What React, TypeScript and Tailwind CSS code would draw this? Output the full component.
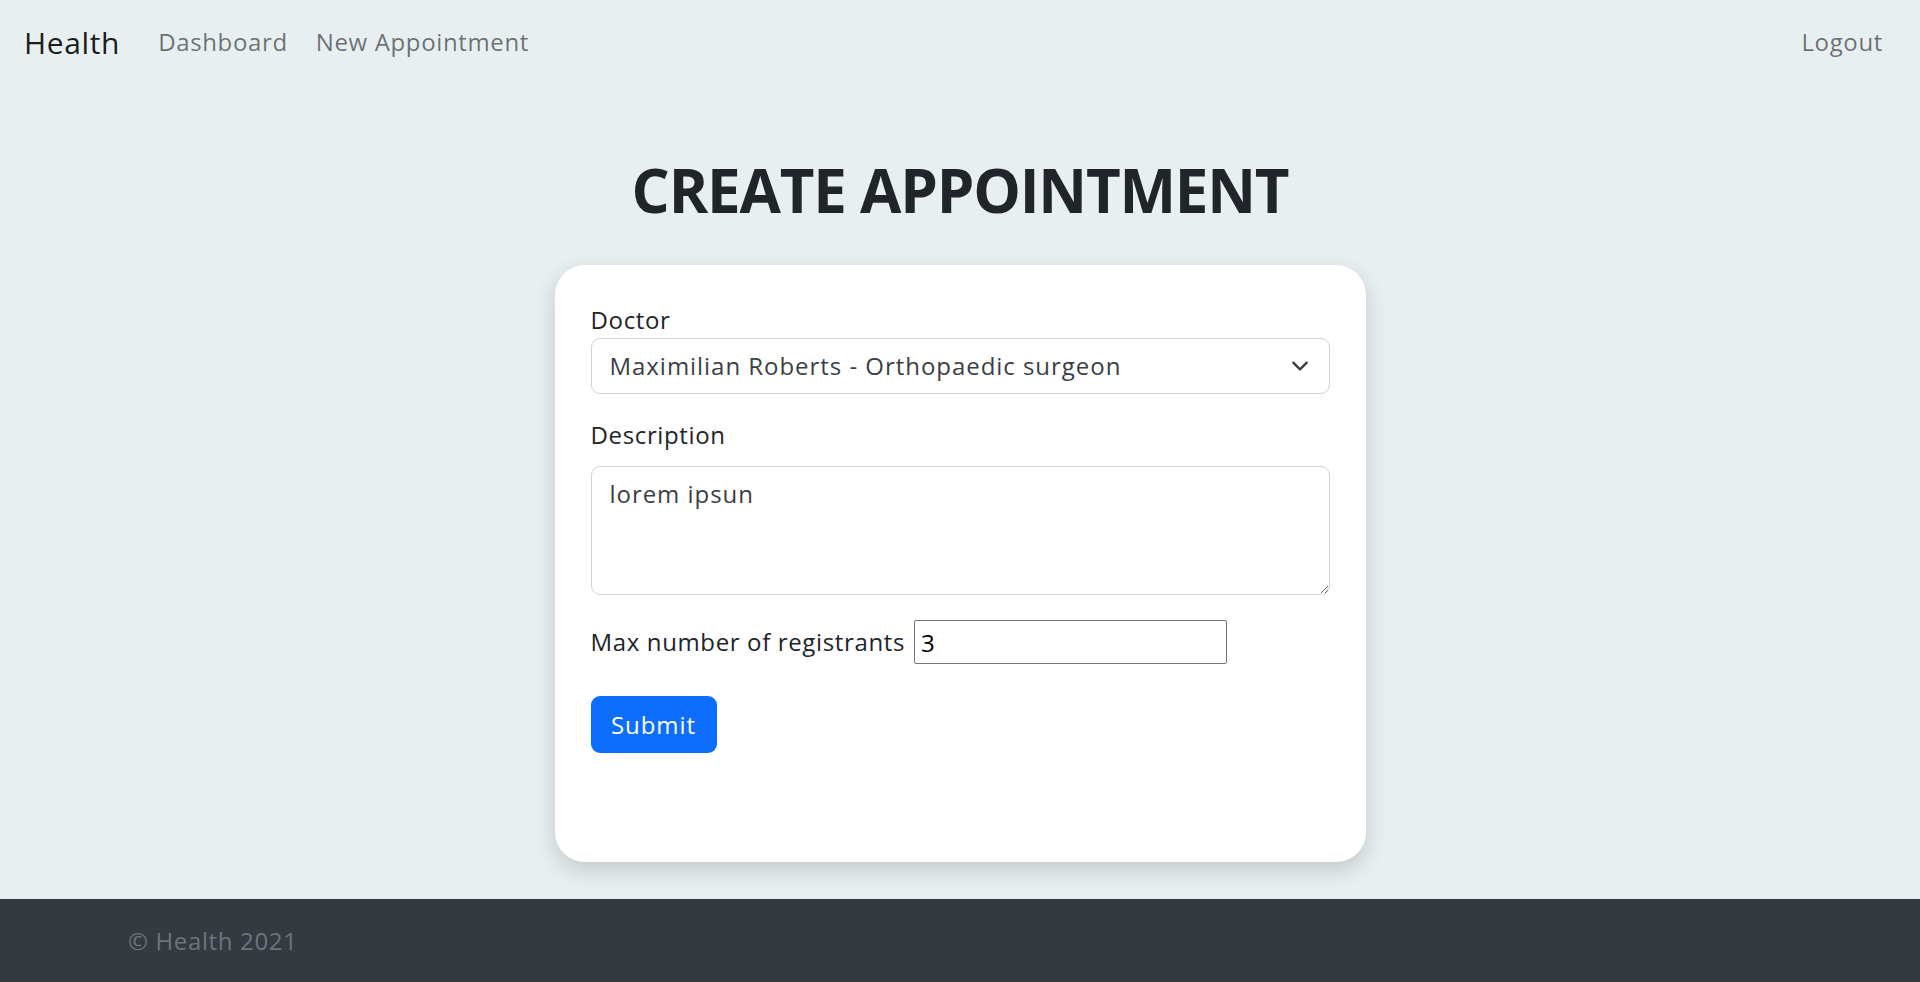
import { useState } from "react";

const DOCTORS = [
  "Maximilian Roberts - Orthopaedic surgeon",
  "Emma Larsen - Cardiologist",
  "Oliver Grant - General practitioner",
];

function Navbar() {
  return (
    <nav className="flex h-[84px] items-center justify-between pl-[24px] pr-[37px]">
      <div className="flex items-center">
        <a className="mr-[24px] text-[30px] leading-[45px] text-black/90">Health</a>
        <a className="px-[14px] text-[24px] leading-[36px] text-black/55">Dashboard</a>
        <a className="px-[14px] text-[24px] leading-[36px] text-black/55">New Appointment</a>
      </div>
      <a className="text-[24px] leading-[36px] text-black/55">Logout</a>
    </nav>
  );
}

function Chevron() {
  return (
    <svg
      viewBox="0 0 16 16"
      className="pointer-events-none absolute right-[18px] top-1/2 h-[18px] w-[24px] -translate-y-1/2"
      fill="none"
      stroke="#343a40"
      strokeWidth="2"
      strokeLinecap="round"
      strokeLinejoin="round"
    >
      <path d="M2 5l6 6 6-6" />
    </svg>
  );
}

function AppointmentForm() {
  const [doctor, setDoctor] = useState(DOCTORS[0]);
  const [description, setDescription] = useState("lorem ipsun");
  const [max, setMax] = useState("3");

  return (
    <form className="mx-auto w-[811px] rounded-[30px] bg-white px-[36px] pt-[37px] pb-[109px] shadow-[0_8px_22px_rgba(0,0,0,0.16)]">
      <label className="block text-[24px] leading-[36px] text-[#212529]">Doctor</label>
      <div className="relative">
        <select
          value={doctor}
          onChange={(e) => setDoctor(e.target.value)}
          className="block h-[56px] w-full appearance-none rounded-[9px] border border-[#ced4da] bg-white pl-[18px] pr-[54px] text-[24px] leading-[36px] tracking-[0.04em] text-[#3a3f44] outline-none"
        >
          {DOCTORS.map((d) => (
            <option key={d}>{d}</option>
          ))}
        </select>
        <Chevron />
      </div>

      <label className="mt-[23px] mb-[13px] block text-[24px] leading-[36px] text-[#212529]">Description</label>
      <textarea
        rows={3}
        value={description}
        onChange={(e) => setDescription(e.target.value)}
        className="block h-[129px] w-full rounded-[9px] border border-[#ced4da] px-[18px] py-[9px] text-[24px] leading-[36px] tracking-[0.04em] text-[#3a3f44] outline-none"
      />

      <div className="mt-[25px] flex items-center text-[24px] leading-[36px] text-[#212529]">
        <label>Max number of registrants</label>
        <input
          type="number"
          value={max}
          onChange={(e) => setMax(e.target.value)}
          className="ml-[9px] h-[44px] w-[313px] rounded-[2px] border border-[#767676] px-[6px] text-[24px] leading-[36px] text-black outline-none"
        />
      </div>

      <button
        type="button"
        className="mt-[32px] h-[57px] w-[126px] rounded-[9px] bg-[#0d6efd] text-[24px] font-medium leading-[36px] tracking-[0.04em] text-white"
      >
        Submit
      </button>
    </form>
  );
}

export default function App() {
  return (
    <div className="flex min-h-screen flex-col bg-[#e8eff1] font-['Open_Sans',sans-serif] tracking-[0.04em]">
      <Navbar />
      <main className="flex-1">
        <h1 className="mt-[70px] mb-[39px] text-center text-[60px] font-bold leading-[72px] tracking-[-0.02em] text-[#212529]">
          CREATE APPOINTMENT
        </h1>
        <AppointmentForm />
      </main>
      <footer className="flex h-[83px] items-center bg-[#343a40] px-[128px]">
        <span className="text-[24px] leading-[36px] text-[#6c757d]">© Health 2021</span>
      </footer>
    </div>
  );
}
